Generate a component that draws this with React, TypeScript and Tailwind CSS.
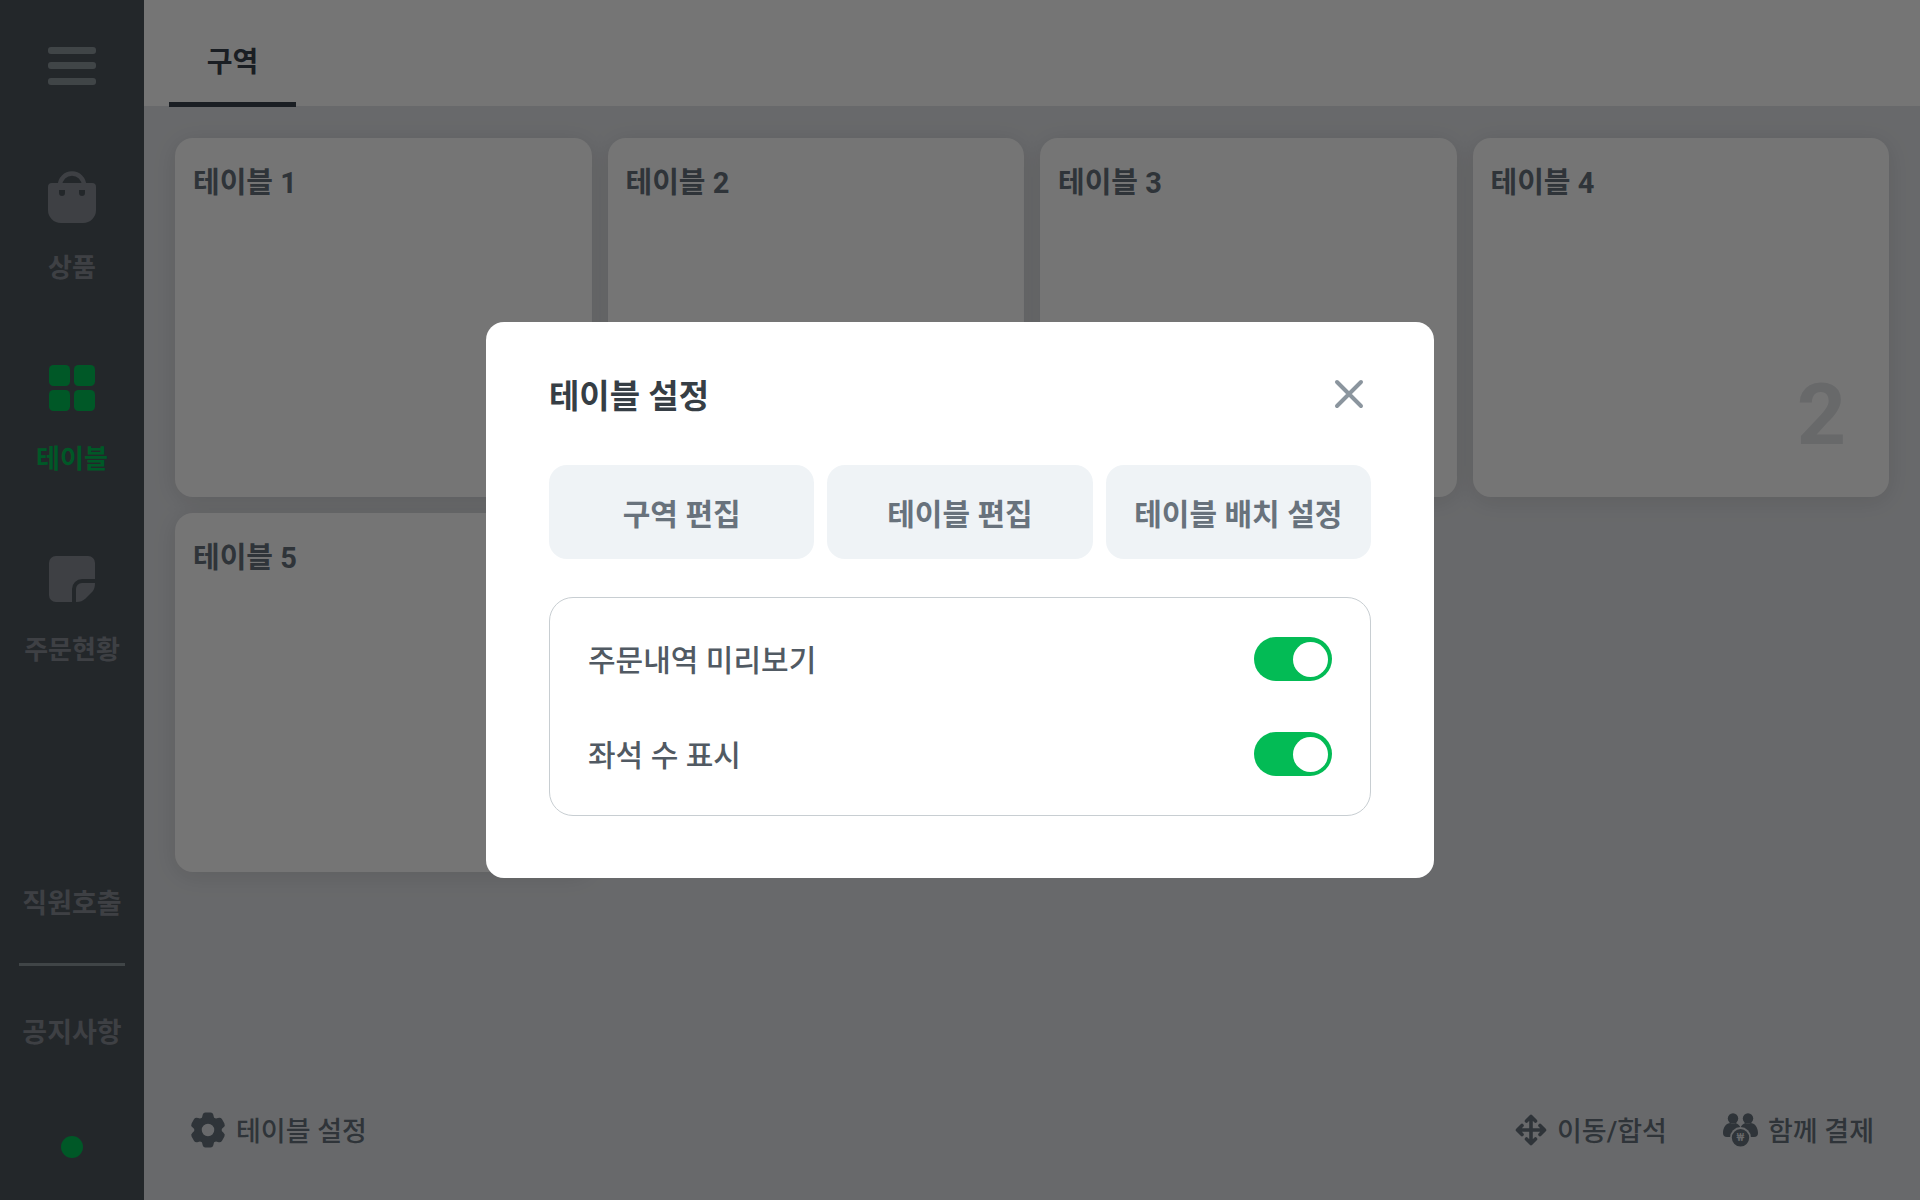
import { useState } from "react";
import type { ReactNode } from "react";

type NavItem = {
  label: string;
  icon: ReactNode;
  active?: boolean;
};

type TableInfo = {
  id: number;
  name: string;
  seats?: number;
};

function MenuIcon() {
  return (
    <svg width="48" height="38" viewBox="0 0 48 38" fill="currentColor" aria-hidden="true">
      <rect width="48" height="7" rx="3" />
      <rect y="15" width="48" height="7" rx="3" />
      <rect y="31" width="48" height="7" rx="3" />
    </svg>
  );
}

function BagIcon() {
  return (
    <svg width="48" height="52" viewBox="0 0 48 52" aria-hidden="true">
      <path d="M12 14.5a12 12 0 0 1 24 0" fill="none" stroke="currentColor" strokeWidth="4.5" />
      <path
        fill="currentColor"
        fillRule="evenodd"
        d="M4 12h40a4 4 0 0 1 4 4v23a13 13 0 0 1-13 13H13A13 13 0 0 1 0 39V16a4 4 0 0 1 4-4zM11 19v3a3 3 0 0 0 6 0v-3zM31 19v3a3 3 0 0 0 6 0v-3z"
      />
    </svg>
  );
}

function GridIcon() {
  return (
    <svg width="46" height="46" viewBox="0 0 46 46" fill="currentColor" aria-hidden="true">
      <rect width="21" height="21" rx="4.5" />
      <rect x="25" width="21" height="21" rx="4.5" />
      <rect y="25" width="21" height="21" rx="4.5" />
      <rect x="25" y="25" width="21" height="21" rx="4.5" />
    </svg>
  );
}

function NoteIcon() {
  return (
    <svg width="46" height="46" viewBox="0 0 46 46" fill="currentColor" aria-hidden="true">
      <path d="M7 0h32a7 7 0 0 1 7 7v16H33a10 10 0 0 0-10 10v13H7a7 7 0 0 1-7-7V7a7 7 0 0 1 7-7z" />
      <path d="M46 27H33a6 6 0 0 0-6 6v13c4 0 7-1 9.5-3.5l7-7C45 33.5 46 31 46 27z" />
    </svg>
  );
}

function GearIcon() {
  return (
    <svg width="36" height="36" viewBox="0 0 36 36" fill="currentColor" aria-hidden="true">
      <circle cx="18" cy="18" r="10" fill="none" stroke="currentColor" strokeWidth="7.5" />
      {[0, 60, 120, 180, 240, 300].map((deg) => (
        <path
          key={deg}
          d="M11.5 8l1-4.5Q13 .5 15.5.5h5q2.500 0 3 3l1 4.500z"
          transform={`rotate(${deg} 18 18)`}
        />
      ))}
    </svg>
  );
}

function MoveIcon() {
  return (
    <svg
      width="32"
      height="32"
      viewBox="0 0 32 32"
      fill="none"
      stroke="currentColor"
      strokeWidth="3.6"
      strokeLinecap="round"
      strokeLinejoin="round"
      aria-hidden="true"
    >
      <path d="M16 3v26M3 16h26M11.5 7L16 2.5 20.5 7M11.5 25l4.500 4.500 4.500-4.500M7 11.5L2.5 16 7 20.5M25 11.5l4.500 4.500-4.500 4.500" />
    </svg>
  );
}

function PeopleIcon() {
  return (
    <svg width="35" height="34" viewBox="0 0 35 34" fill="currentColor" aria-hidden="true">
      <mask id="coin-gap">
        <rect width="35" height="34" fill="white" />
        <circle cx="17.5" cy="24.5" r="10.4" fill="black" />
      </mask>
      <circle cx="10" cy="5.5" r="5.2" />
      <circle cx="25" cy="5.5" r="5.2" />
      <g mask="url(#coin-gap)">
        <path d="M0 20C0 14 3.5 10 7.5 10q2.500 2 5 0c2.500.5 4 2.500 5 4.500V24H4q-4 0-4-4z" />
        <path d="M35 20c0-6-3.500-10-7.500-10q-2.500 2-5 0c-2.500.5-4 2.500-5 4.500V24H31q4 0 4-4z" />
      </g>
      <circle cx="17.5" cy="24.8" r="8.7" />
      <text x="17.5" y="28" textAnchor="middle" fontSize="10" fontWeight="500" fill="#e3e5e9">
        ₩
      </text>
    </svg>
  );
}

function CloseIcon() {
  return (
    <svg
      width="30"
      height="30"
      viewBox="0 0 30 30"
      fill="none"
      stroke="currentColor"
      strokeWidth="4"
      strokeLinecap="round"
      aria-hidden="true"
    >
      <path d="M3 3l24 24M27 3L3 27" />
    </svg>
  );
}

const navItems: NavItem[] = [
  { label: "상품", icon: <BagIcon /> },
  { label: "테이블", icon: <GridIcon />, active: true },
  { label: "주문현황", icon: <NoteIcon /> },
];

const tables: TableInfo[] = [
  { id: 1, name: "테이블 1" },
  { id: 2, name: "테이블 2" },
  { id: 3, name: "테이블 3" },
  { id: 4, name: "테이블 4", seats: 2 },
  { id: 5, name: "테이블 5" },
];

const editActions = ["구역 편집", "테이블 편집", "테이블 배치 설정"];

function Sidebar() {
  return (
    <aside className="flex w-36 shrink-0 flex-col items-center bg-[#4e555d] pt-[47px] pb-[42px] text-[#878d95]">
      <button type="button" aria-label="메뉴" className="text-[#8d969c]">
        <MenuIcon />
      </button>

      <nav className="mt-[86px] flex flex-col items-center gap-[78px]">
        {navItems.map((item) => (
          <button
            key={item.label}
            type="button"
            className={`flex flex-col items-center gap-[29px] text-[26px] leading-8 font-bold ${
              item.active ? "text-[#00bf55]" : ""
            }`}
          >
            <span className="flex h-[52px] items-center">{item.icon}</span>
            {item.label}
          </button>
        ))}
      </nav>

      <div className="mt-auto flex w-full flex-col items-center px-[19px] text-[27px] leading-8 font-bold">
        <button type="button" className="whitespace-nowrap">
          직원호출
        </button>
        <hr className="mt-[43px] mb-[51px] w-full border-t-[3px] border-[#8d969c]" />
        <button type="button" className="whitespace-nowrap">
          공지사항
        </button>
        <span className="mt-[87px] size-[22px] rounded-full bg-[#00bf55]" />
      </div>
    </aside>
  );
}

function TableCard({ table }: { table: TableInfo }) {
  return (
    <button
      type="button"
      className="flex h-[359px] flex-col justify-between rounded-[18px] bg-white px-[18px] pt-[25px] pb-8 text-left shadow-[0_4px_24px_rgba(0,0,0,0.1)]"
    >
      <span className="text-[29px] leading-10 font-bold text-[#66727c]">{table.name}</span>
      {table.seats && (
        <span className="self-end pr-[25px] text-[86px] leading-[100px] font-bold text-[#e3e5e8]">
          {table.seats}
        </span>
      )}
    </button>
  );
}

type FooterButtonProps = {
  icon: ReactNode;
  label: string;
  onClick?: () => void;
};

function FooterButton({ icon, label, onClick }: FooterButtonProps) {
  return (
    <button
      type="button"
      onClick={onClick}
      className="flex items-center gap-[10px] text-[27px] leading-9 font-medium text-[#66727c]"
    >
      {icon}
      <span className="pt-1">{label}</span>
    </button>
  );
}

type SwitchRowProps = {
  id: string;
  label: string;
  checked: boolean;
  onChange: (checked: boolean) => void;
};

function SwitchRow({ id, label, checked, onChange }: SwitchRowProps) {
  return (
    <div className="flex items-center justify-between">
      <label htmlFor={id} className="pt-1 text-[30px] leading-10 font-medium text-[#515a63]">
        {label}
      </label>
      <input
        id={id}
        type="checkbox"
        role="switch"
        checked={checked}
        onChange={(e) => onChange(e.target.checked)}
        className="flex h-11 w-[78px] cursor-pointer appearance-none items-center rounded-full bg-[#c9cfd4] px-1 transition-colors before:size-[35px] before:rounded-full before:bg-white checked:justify-end checked:bg-[#03bb55]"
      />
    </div>
  );
}

function SettingsModal({ onClose }: { onClose: () => void }) {
  const [preview, setPreview] = useState(true);
  const [showSeats, setShowSeats] = useState(true);

  return (
    <div className="fixed inset-0 flex items-center justify-center bg-black/54">
      <div
        role="dialog"
        aria-modal="true"
        aria-labelledby="settings-title"
        className="w-full max-w-[948px] rounded-[18px] bg-white px-[63px] pt-[51px] pb-[62px]"
      >
        <div className="flex items-start justify-between pr-[7px]">
          <h2 id="settings-title" className="pt-1 text-[33px] leading-10 font-bold text-[#363e45]">
            테이블 설정
          </h2>
          <button type="button" aria-label="닫기" onClick={onClose} className="mt-[6px] text-[#8b959e]">
            <CloseIcon />
          </button>
        </div>

        <div className="mt-12 grid grid-cols-3 gap-[13px]">
          {editActions.map((action) => (
            <button
              key={action}
              type="button"
              className="h-[94px] rounded-[18px] bg-[#eff3f6] pt-1 text-[30px] font-bold whitespace-nowrap text-[#68727c]"
            >
              {action}
            </button>
          ))}
        </div>

        {/* Display options */}
        <div className="mt-[38px] flex flex-col gap-[51px] rounded-3xl border border-[#c8ced2] px-[38px] py-[39px]">
          <SwitchRow id="order-preview" label="주문내역 미리보기" checked={preview} onChange={setPreview} />
          <SwitchRow id="seat-count" label="좌석 수 표시" checked={showSeats} onChange={setShowSeats} />
        </div>
      </div>
    </div>
  );
}

function App() {
  const [modalOpen, setModalOpen] = useState(true);

  return (
    <div className="flex min-h-screen bg-[#e3e5e9] font-['Roboto','Noto_Sans_CJK_KR',sans-serif]">
      <Sidebar />

      <div className="flex min-w-0 flex-1 flex-col">
        <header className="flex h-[106px] bg-white px-[25px]">
          <button
            type="button"
            className="-mb-px w-[127px] border-b-[5px] border-[#3a424c] pt-6 text-[28px] font-bold text-[#3a424c]"
          >
            구역
          </button>
        </header>

        <main className="grid flex-1 grid-cols-4 content-start gap-4 px-[31px] py-8">
          {tables.map((table) => (
            <TableCard key={table.id} table={table} />
          ))}
        </main>

        <footer className="flex items-center justify-between px-[46px] pt-6 pb-[50px]">
          <FooterButton icon={<GearIcon />} label="테이블 설정" onClick={() => setModalOpen(true)} />
          <div className="flex items-center gap-14">
            <FooterButton icon={<MoveIcon />} label="이동/합석" />
            <FooterButton icon={<PeopleIcon />} label="함께 결제" />
          </div>
        </footer>
      </div>

      {modalOpen && <SettingsModal onClose={() => setModalOpen(false)} />}
    </div>
  );
}

export default App;
